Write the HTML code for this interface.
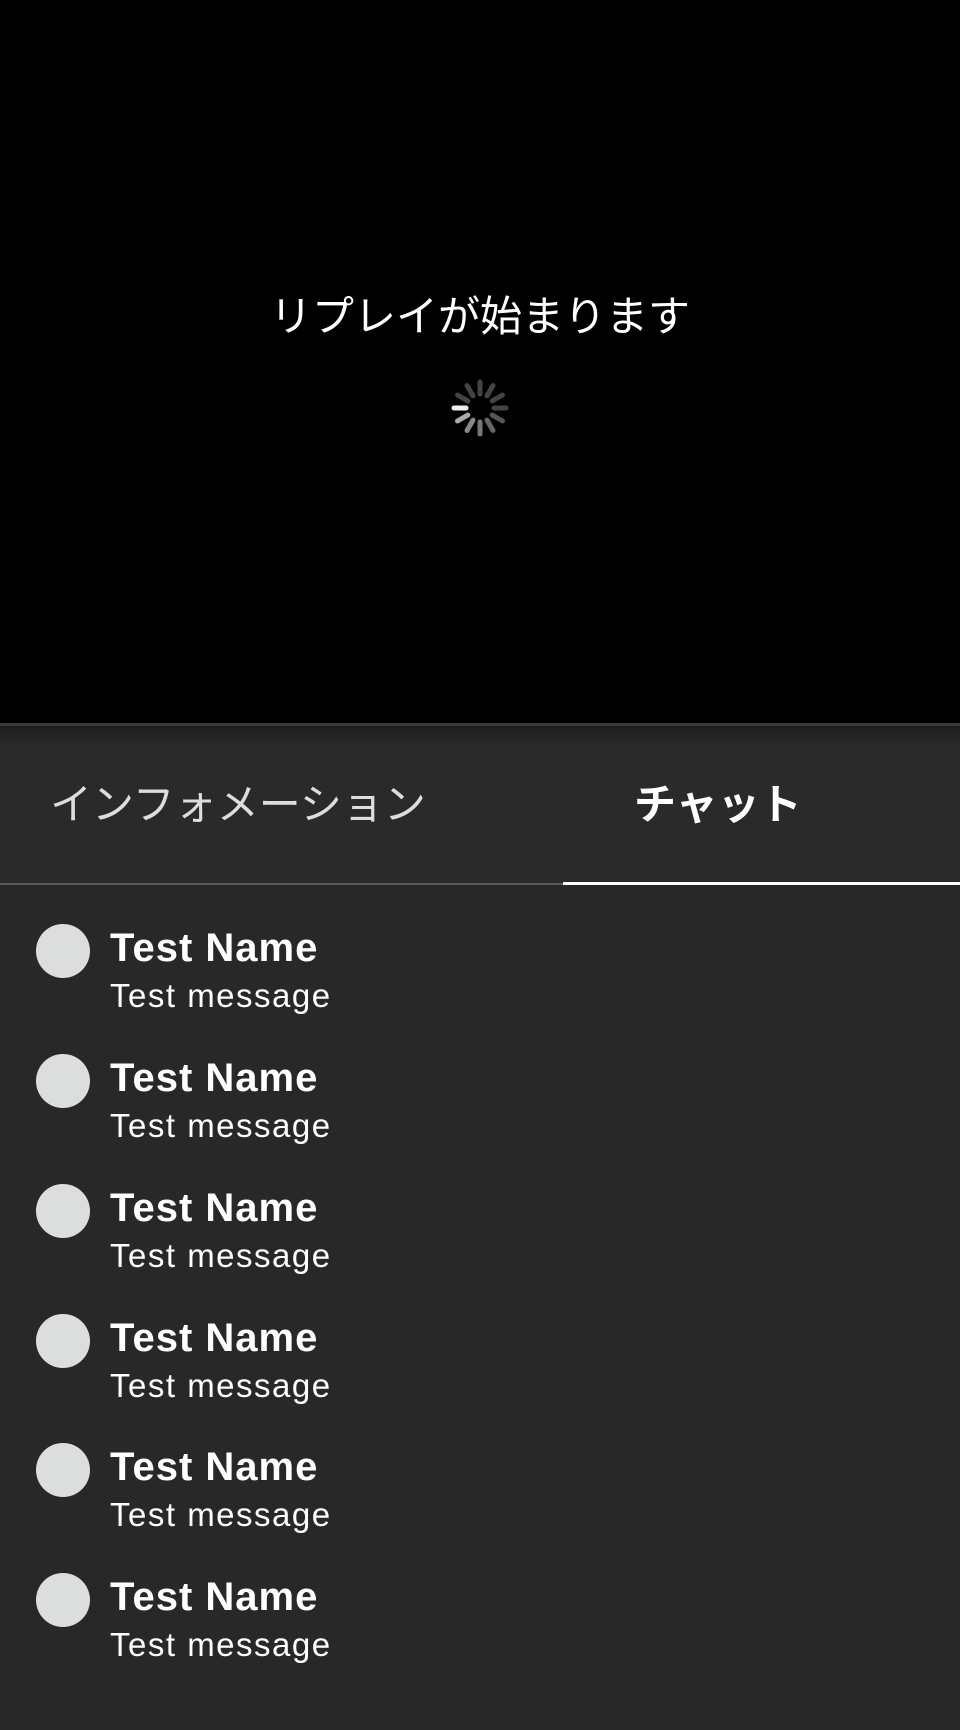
<!DOCTYPE html>
<html><head><meta charset="utf-8"><style>
html,body{margin:0;padding:0;}
body{width:960px;height:1704px;background:#282828;position:relative;overflow:hidden;font-family:"Liberation Sans","Noto Sans CJK JP",sans-serif;}
.video{position:absolute;left:0;top:0;width:960px;height:723px;background:#000;}
.title{position:absolute;left:0;width:960px;top:287px;text-align:center;color:#fff;font-size:42px;line-height:54px;font-family:"Noto Sans CJK JP",sans-serif;}
.sep{position:absolute;left:0;top:723px;width:960px;height:3px;background:#3a3a3a;}
.tabs{position:absolute;left:0;top:726px;width:960px;height:157px;background:linear-gradient(#1e1e1e 0,#2a2a2a 20px,#2a2a2a 100%);}
.tab{position:absolute;top:48px;font-size:42px;line-height:56px;font-family:"Noto Sans CJK JP",sans-serif;}
.ul1{position:absolute;left:0;top:883px;width:563px;height:2px;background:#5a5a5a;}
.ul2{position:absolute;left:563px;top:882px;width:397px;height:3px;background:#fff;}
.row{position:absolute;left:0;width:960px;height:130px;}
.av{position:absolute;left:36px;top:-27px;width:54px;height:54px;border-radius:50%;background:#dcdedd;}
.nm{position:absolute;left:110px;top:-31px;font-size:40px;font-weight:bold;color:#fff;line-height:56px;letter-spacing:1px;white-space:nowrap;}
.ms{position:absolute;left:110px;top:20px;font-size:33px;color:#fff;line-height:50px;letter-spacing:1.5px;white-space:nowrap;}
</style></head><body>
<div class="video">
<div class="title">リプレイが始まります</div>
<svg style="position:absolute;left:448px;top:376px" width="64" height="64" viewBox="-32 -32 64 64">
<g stroke-linecap="round" stroke-width="5">
<line x1="0" y1="-14" x2="0" y2="-26" stroke="#444" transform="rotate(0)"/>
<line x1="0" y1="-14" x2="0" y2="-26" stroke="#444" transform="rotate(30)"/>
<line x1="0" y1="-14" x2="0" y2="-26" stroke="#444" transform="rotate(60)"/>
<line x1="0" y1="-14" x2="0" y2="-26" stroke="#444" transform="rotate(90)"/>
<line x1="0" y1="-14" x2="0" y2="-26" stroke="#555" transform="rotate(120)"/>
<line x1="0" y1="-14" x2="0" y2="-26" stroke="#666" transform="rotate(150)"/>
<line x1="0" y1="-14" x2="0" y2="-26" stroke="#777" transform="rotate(180)"/>
<line x1="0" y1="-14" x2="0" y2="-26" stroke="#888" transform="rotate(210)"/>
<line x1="0" y1="-14" x2="0" y2="-26" stroke="#aaa" transform="rotate(240)"/>
<line x1="0" y1="-14" x2="0" y2="-26" stroke="#eee" transform="rotate(270)"/>
<line x1="0" y1="-14" x2="0" y2="-26" stroke="#444" transform="rotate(300)"/>
<line x1="0" y1="-14" x2="0" y2="-26" stroke="#444" transform="rotate(330)"/>
</g></svg>
</div>
<div class="sep"></div>
<div class="tabs">
<div class="tab" style="left:50px;color:#ddd;">インフォメーション</div>
<div class="tab" style="left:634px;color:#fff;font-weight:bold;">チャット</div>
</div>
<div class="ul1"></div><div class="ul2"></div>
<div class="row" style="top:951px"><div class="av"></div><div class="nm">Test Name</div><div class="ms">Test message</div></div>
<div class="row" style="top:1081px"><div class="av"></div><div class="nm">Test Name</div><div class="ms">Test message</div></div>
<div class="row" style="top:1211px"><div class="av"></div><div class="nm">Test Name</div><div class="ms">Test message</div></div>
<div class="row" style="top:1341px"><div class="av"></div><div class="nm">Test Name</div><div class="ms">Test message</div></div>
<div class="row" style="top:1470px"><div class="av"></div><div class="nm">Test Name</div><div class="ms">Test message</div></div>
<div class="row" style="top:1600px"><div class="av"></div><div class="nm">Test Name</div><div class="ms">Test message</div></div>
</body></html>
